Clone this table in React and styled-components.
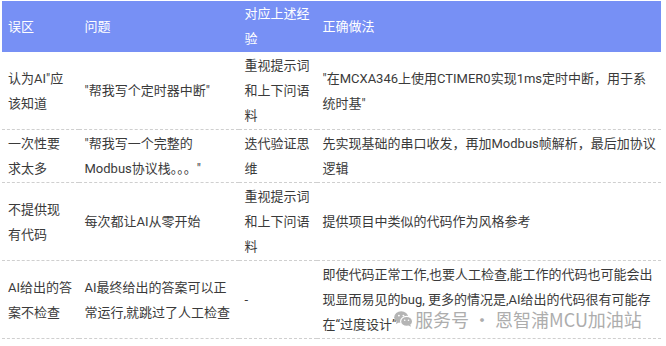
import React from 'react';
import styled, { createGlobalStyle } from 'styled-components';

const GlobalStyle = createGlobalStyle`
  html, body {
    margin: 0;
    padding: 0;
    background: #fff;
  }
  body {
    font-family: Roboto, "Noto Sans CJK SC", sans-serif;
    font-size: 13px;
    color: #3a3a3a;
  }
`;

const rows = [
  {
    myth: '认为AI"应该知道',
    problem: '"帮我写个定时器中断"',
    lesson: '重视提示词和上下问语料',
    fix: '"在MCXA346上使用CTIMER0实现1ms定时中断，用于系统时基"',
  },
  {
    myth: '一次性要求太多',
    problem: '"帮我写一个完整的Modbus协议栈。。。"',
    lesson: '迭代验证思维',
    fix: '先实现基础的串口收发，再加Modbus帧解析，最后加协议逻辑',
  },
  {
    myth: '不提供现有代码',
    problem: '每次都让AI从零开始',
    lesson: '重视提示词和上下问语料',
    fix: '提供项目中类似的代码作为风格参考',
  },
  {
    myth: 'AI给出的答案不检查',
    problem: 'AI最终给出的答案可以正常运行,就跳过了人工检查',
    lesson: '-',
    fix: '即使代码正常工作,也要人工检查,能工作的代码也可能会出现显而易见的bug, 更多的情况是,AI给出的代码很有可能存在“过度设计”',
  },
];

function WechatIcon() {
  return (
    <svg width="19" height="16" viewBox="0 0 19 16">
      <ellipse cx="7.2" cy="6.2" rx="7" ry="5.9" fill="#b4b4b4" />
      <path d="M2.6 10.2 L2 13 L5 11.4 Z" fill="#b4b4b4" />
      <circle cx="4.9" cy="4.6" r="0.95" fill="#fff" />
      <circle cx="9.4" cy="4.6" r="0.95" fill="#fff" />
      <ellipse cx="12.6" cy="10.4" rx="6" ry="5" fill="#b4b4b4" stroke="#fff" strokeWidth="1.2" />
      <path d="M16.2 13.6 L17 15.8 L14.4 14.6 Z" fill="#b4b4b4" />
      <circle cx="10.7" cy="9.3" r="0.8" fill="#fff" />
      <circle cx="14.5" cy="9.3" r="0.8" fill="#fff" />
    </svg>
  );
}

export default function App() {
  return (
    <>
      <GlobalStyle />
      <Page>
        <Table>
          <colgroup>
            <col style={{ width: '76.5px' }} />
            <col style={{ width: '160px' }} />
            <col style={{ width: '78px' }} />
            <col />
          </colgroup>
          <thead>
            <tr>
              <Th>误区</Th>
              <Th>问题</Th>
              <Th>对应上述经验</Th>
              <Th>正确做法</Th>
            </tr>
          </thead>
          <tbody>
            {rows.map((r, i) => (
              <Row key={i}>
                <Td>{r.myth}</Td>
                <Td>{r.problem}</Td>
                <Td>{r.lesson}</Td>
                <Td>{r.fix}</Td>
              </Row>
            ))}
          </tbody>
        </Table>
        <Watermark>
          <WechatIcon />
          <span>服务号 · 恩智浦MCU加油站</span>
        </Watermark>
      </Page>
    </>
  );
}

const Page = styled.div`
  position: relative;
  width: 666px;
  height: 346px;
  overflow: hidden;
  padding: 1px 0 0 2px;
  box-sizing: border-box;
`;

const Table = styled.table`
  width: 659px;
  table-layout: fixed;
  border-collapse: collapse;
  border-spacing: 0;
`;

const Th = styled.th`
  background: #7790f5;
  color: #fff;
  font-weight: normal;
  text-align: left;
  vertical-align: middle;
  line-height: 25px;
  padding: 0 6px 1px 6px;
  &:last-child {
    padding-right: 2px;
  }
`;

const Row = styled.tr`
  border-bottom: 1px dashed #cfcfcf;
`;

const Td = styled.td`
  vertical-align: middle;
  line-height: 25px;
  padding: 1px 6px;
  word-break: normal;
  &:last-child {
    padding-right: 2px;
  }
`;

const Watermark = styled.div`
  position: absolute;
  left: 394px;
  top: 308px;
  display: flex;
  align-items: center;
  gap: 2px;
  color: #adadad;
  font-family: "Noto Sans CJK SC", sans-serif;
  font-size: 18px;
  line-height: 22px;
  pointer-events: none;
`;
